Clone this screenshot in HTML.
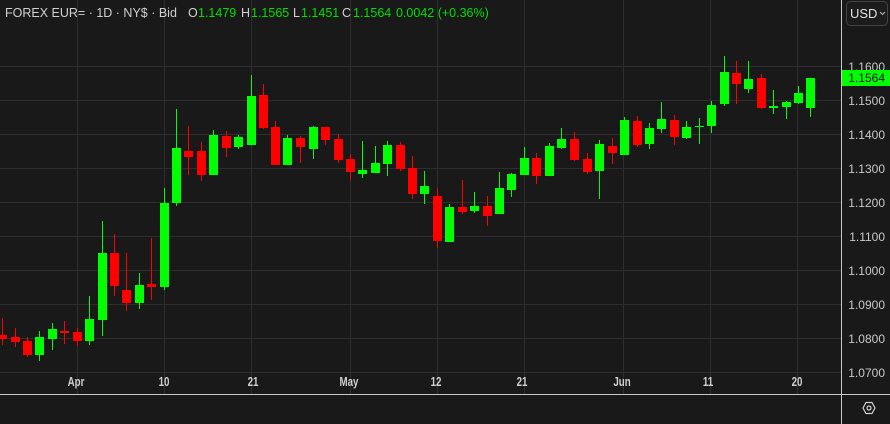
<!DOCTYPE html>
<html><head><meta charset="utf-8"><style>
html,body{margin:0;padding:0;background:#191919;width:890px;height:424px;overflow:hidden}
svg{display:block}
text{font-family:"Liberation Sans",Arial,sans-serif}
</style></head><body>
<svg width="890" height="424" viewBox="0 0 890 424" xmlns="http://www.w3.org/2000/svg">
<rect width="890" height="424" fill="#191919"/>
<g stroke="#2e2e2e" stroke-width="1">
<line x1="0" y1="66.5" x2="841" y2="66.5"/><line x1="0" y1="100.5" x2="841" y2="100.5"/><line x1="0" y1="134.5" x2="841" y2="134.5"/><line x1="0" y1="168.5" x2="841" y2="168.5"/><line x1="0" y1="202.5" x2="841" y2="202.5"/><line x1="0" y1="236.5" x2="841" y2="236.5"/><line x1="0" y1="270.5" x2="841" y2="270.5"/><line x1="0" y1="304.5" x2="841" y2="304.5"/><line x1="0" y1="338.5" x2="841" y2="338.5"/><line x1="0" y1="372.5" x2="841" y2="372.5"/>
<line x1="77.5" y1="0" x2="77.5" y2="394"/><line x1="164.5" y1="0" x2="164.5" y2="394"/><line x1="251.5" y1="0" x2="251.5" y2="394"/><line x1="350.5" y1="0" x2="350.5" y2="394"/><line x1="437.5" y1="0" x2="437.5" y2="394"/><line x1="524.5" y1="0" x2="524.5" y2="394"/><line x1="623.5" y1="0" x2="623.5" y2="394"/><line x1="710.5" y1="0" x2="710.5" y2="394"/><line x1="797.5" y1="0" x2="797.5" y2="394"/>
</g>
<g fill="#ff0000">
<rect x="2" y="318" width="1" height="27"/><rect x="-2" y="335" width="9" height="4"/>
<rect x="15" y="328" width="1" height="19"/><rect x="11" y="337" width="9" height="5"/>
<rect x="27" y="337" width="1" height="20"/><rect x="23" y="341" width="9" height="14"/>
<rect x="64" y="321" width="1" height="23"/><rect x="60" y="331" width="9" height="2"/>
<rect x="77" y="328" width="1" height="18"/><rect x="73" y="332" width="9" height="9"/>
<rect x="114" y="234" width="1" height="62"/><rect x="110" y="253" width="9" height="33"/>
<rect x="126" y="253" width="1" height="58"/><rect x="122" y="290" width="9" height="13"/>
<rect x="151" y="238" width="1" height="62"/><rect x="147" y="284" width="9" height="3"/>
<rect x="188" y="126" width="1" height="49"/><rect x="184" y="151" width="9" height="6"/>
<rect x="201" y="142" width="1" height="39"/><rect x="197" y="151" width="9" height="24"/>
<rect x="226" y="131" width="1" height="26"/><rect x="222" y="136" width="9" height="12"/>
<rect x="263" y="84" width="1" height="45"/><rect x="259" y="95" width="9" height="33"/>
<rect x="275" y="121" width="1" height="44"/><rect x="271" y="127" width="9" height="38"/>
<rect x="300" y="136" width="1" height="27"/><rect x="296" y="138" width="9" height="9"/>
<rect x="325" y="127" width="1" height="18"/><rect x="321" y="127" width="9" height="13"/>
<rect x="338" y="134" width="1" height="29"/><rect x="334" y="139" width="9" height="21"/>
<rect x="350" y="154" width="1" height="26"/><rect x="346" y="159" width="9" height="13"/>
<rect x="400" y="142" width="1" height="29"/><rect x="396" y="145" width="9" height="24"/>
<rect x="412" y="156" width="1" height="43"/><rect x="408" y="168" width="9" height="26"/>
<rect x="437" y="188" width="1" height="60"/><rect x="433" y="196" width="9" height="45"/>
<rect x="462" y="180" width="1" height="34"/><rect x="458" y="207" width="9" height="5"/>
<rect x="487" y="196" width="1" height="30"/><rect x="483" y="206" width="9" height="10"/>
<rect x="536" y="153" width="1" height="31"/><rect x="532" y="158" width="9" height="18"/>
<rect x="574" y="132" width="1" height="29"/><rect x="570" y="139" width="9" height="21"/>
<rect x="587" y="153" width="1" height="21"/><rect x="583" y="159" width="9" height="13"/>
<rect x="612" y="138" width="1" height="26"/><rect x="608" y="146" width="9" height="7"/>
<rect x="637" y="116" width="1" height="31"/><rect x="633" y="121" width="9" height="24"/>
<rect x="674" y="115" width="1" height="30"/><rect x="670" y="120" width="9" height="17"/>
<rect x="736" y="61" width="1" height="43"/><rect x="732" y="73" width="9" height="11"/>
<rect x="761" y="74" width="1" height="35"/><rect x="757" y="78" width="9" height="30"/>
</g>
<g fill="#00ff00">
<rect x="39" y="331" width="1" height="30"/><rect x="35" y="337" width="9" height="18"/>
<rect x="52" y="323" width="1" height="27"/><rect x="48" y="329" width="9" height="10"/>
<rect x="89" y="296" width="1" height="49"/><rect x="85" y="319" width="9" height="22"/>
<rect x="102" y="221" width="1" height="115"/><rect x="98" y="253" width="9" height="67"/>
<rect x="139" y="273" width="1" height="36"/><rect x="135" y="285" width="9" height="18"/>
<rect x="164" y="188" width="1" height="102"/><rect x="160" y="203" width="9" height="84"/>
<rect x="176" y="109" width="1" height="97"/><rect x="172" y="148" width="9" height="55"/>
<rect x="213" y="130" width="1" height="45"/><rect x="209" y="135" width="9" height="40"/>
<rect x="238" y="135" width="1" height="14"/><rect x="234" y="137" width="9" height="10"/>
<rect x="251" y="75" width="1" height="70"/><rect x="247" y="96" width="9" height="49"/>
<rect x="287" y="135" width="1" height="30"/><rect x="283" y="138" width="9" height="27"/>
<rect x="313" y="126" width="1" height="33"/><rect x="309" y="127" width="9" height="22"/>
<rect x="362" y="141" width="1" height="37"/><rect x="358" y="170" width="9" height="4"/>
<rect x="375" y="146" width="1" height="27"/><rect x="371" y="163" width="9" height="10"/>
<rect x="387" y="141" width="1" height="35"/><rect x="383" y="145" width="9" height="19"/>
<rect x="424" y="171" width="1" height="33"/><rect x="420" y="186" width="9" height="8"/>
<rect x="449" y="204" width="1" height="38"/><rect x="445" y="207" width="9" height="35"/>
<rect x="474" y="192" width="1" height="21"/><rect x="470" y="206" width="9" height="5"/>
<rect x="499" y="172" width="1" height="42"/><rect x="495" y="188" width="9" height="26"/>
<rect x="511" y="173" width="1" height="24"/><rect x="507" y="174" width="9" height="16"/>
<rect x="524" y="147" width="1" height="28"/><rect x="520" y="158" width="9" height="17"/>
<rect x="549" y="143" width="1" height="33"/><rect x="545" y="146" width="9" height="30"/>
<rect x="561" y="128" width="1" height="21"/><rect x="557" y="139" width="9" height="9"/>
<rect x="599" y="140" width="1" height="59"/><rect x="595" y="144" width="9" height="27"/>
<rect x="624" y="117" width="1" height="38"/><rect x="620" y="120" width="9" height="35"/>
<rect x="649" y="123" width="1" height="26"/><rect x="645" y="128" width="9" height="16"/>
<rect x="661" y="102" width="1" height="31"/><rect x="657" y="119" width="9" height="10"/>
<rect x="686" y="121" width="1" height="18"/><rect x="682" y="127" width="9" height="11"/>
<rect x="699" y="118" width="1" height="26"/><rect x="695" y="126" width="9" height="1"/>
<rect x="711" y="101" width="1" height="32"/><rect x="707" y="105" width="9" height="21"/>
<rect x="724" y="56" width="1" height="50"/><rect x="720" y="72" width="9" height="32"/>
<rect x="748" y="61" width="1" height="32"/><rect x="744" y="79" width="9" height="10"/>
<rect x="773" y="90" width="1" height="24"/><rect x="769" y="106" width="9" height="2"/>
<rect x="786" y="101" width="1" height="18"/><rect x="782" y="102" width="9" height="5"/>
<rect x="798" y="86" width="1" height="18"/><rect x="794" y="93" width="9" height="10"/>
<rect x="810" y="78" width="1" height="39"/><rect x="806" y="78" width="9" height="30"/>
</g>
<line x1="841.5" y1="0" x2="841.5" y2="424" stroke="#c8c8c8" stroke-width="1"/>
<line x1="0" y1="394.5" x2="890" y2="394.5" stroke="#c8c8c8" stroke-width="1"/>
<rect x="0" y="395" width="841" height="29" fill="#191919"/>
<rect x="842" y="395" width="48" height="29" fill="#191919"/>
<!-- header -->
<g font-size="12.5">
<text x="5" y="17" fill="#d0d0d0">FOREX EUR= · 1D · NY$ · Bid</text>
<text x="188" y="17" fill="#d0d0d0">O</text><text x="198" y="17" fill="#00e000">1.1479</text>
<text x="241" y="17" fill="#d0d0d0">H</text><text x="251" y="17" fill="#00e000">1.1565</text>
<text x="293" y="17" fill="#d0d0d0">L</text><text x="301" y="17" fill="#00e000">1.1451</text>
<text x="342" y="17" fill="#d0d0d0">C</text><text x="353" y="17" fill="#00e000">1.1564</text>
<text x="396" y="17" fill="#00e000">0.0042 (+0.36%)</text>
</g>
<rect x="846.5" y="1.5" width="41" height="24" rx="4" fill="#1c1c1c" stroke="#444"/>
<text x="850" y="18" font-size="13" fill="#e0e0e0">USD</text>
<path d="M880 12 l2.5 2.5 l2.5 -2.5" fill="none" stroke="#bbb" stroke-width="1"/>
<g font-size="12" fill="#c8c8c8" text-anchor="end">
<text x="885" y="71">1.1600</text><text x="885" y="105">1.1500</text><text x="885" y="139">1.1400</text><text x="885" y="173">1.1300</text><text x="885" y="207">1.1200</text><text x="885" y="241">1.1100</text><text x="885" y="275">1.1000</text><text x="885" y="309">1.0900</text><text x="885" y="343">1.0800</text><text x="885" y="377">1.0700</text>
</g>
<rect x="842" y="70" width="48" height="16" fill="#00ff00"/>
<text x="885" y="82" font-size="12" fill="#111" text-anchor="end">1.1564</text>
<g font-size="13" fill="#d0d0d0" text-anchor="middle" font-weight="bold">
<text x="76" y="386" transform="translate(76 0) scale(0.75 1) translate(-76 0)">Apr</text>
<text x="164" y="386" transform="translate(164 0) scale(0.75 1) translate(-164 0)">10</text>
<text x="253" y="386" transform="translate(253 0) scale(0.75 1) translate(-253 0)">21</text>
<text x="349" y="386" transform="translate(349 0) scale(0.75 1) translate(-349 0)">May</text>
<text x="436" y="386" transform="translate(436 0) scale(0.75 1) translate(-436 0)">12</text>
<text x="522" y="386" transform="translate(522 0) scale(0.75 1) translate(-522 0)">21</text>
<text x="622" y="386" transform="translate(622 0) scale(0.75 1) translate(-622 0)">Jun</text>
<text x="708" y="386" transform="translate(708 0) scale(0.75 1) translate(-708 0)">11</text>
<text x="797" y="386" transform="translate(797 0) scale(0.75 1) translate(-797 0)">20</text>
</g>
<polygon points="863,408 866,402.5 872,402.5 875,408 872,413.5 866,413.5" fill="none" stroke="#d0d0d0" stroke-width="1.2"/>
<circle cx="869" cy="408" r="2" fill="none" stroke="#d0d0d0" stroke-width="1.2"/>
</svg>
</body></html>
